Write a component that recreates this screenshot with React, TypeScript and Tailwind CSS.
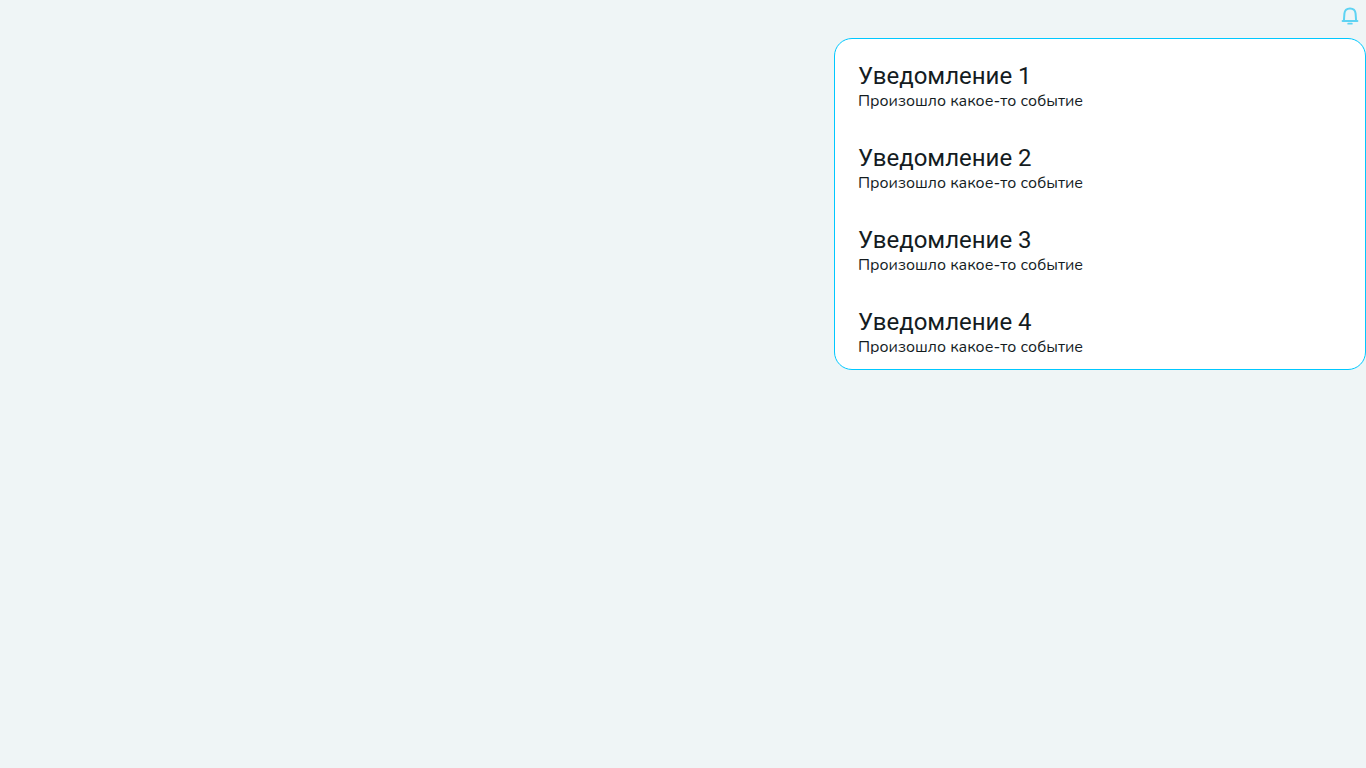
const notifications = [1, 2, 3, 4].map((id) => ({
  id,
  title: `Уведомление ${id}`,
  text: 'Произошло какое-то событие',
}));

function BellIcon() {
  return (
    <svg width="20" height="20" viewBox="0 0 20 20" fill="none" aria-hidden="true">
      <path
        d="M2.6 14.9H17.4M3.9 14.6L4.4 7.6C4.7 4.4 6.7 2.5 10 2.5S15.3 4.4 15.6 7.6L16.1 14.6"
        stroke="#5ed3f3"
        strokeWidth="2"
        strokeLinecap="round"
      />
      <path d="M8.2 17.7H11.8" stroke="#5ed3f3" strokeWidth="1.8" strokeLinecap="round" />
    </svg>
  );
}

export default function App() {
  return (
    <main className="flex min-h-screen flex-col items-end bg-[#eff5f6] text-[#141c1f]">
      <button type="button" aria-label="Уведомления" className="flex h-8 w-8 items-center justify-center">
        <BellIcon />
      </button>
      <section className="mt-1.5 w-full max-w-[532px] rounded-[18px] border border-[#00c8ff] bg-white p-[15px]">
        <ul className="flex h-[300px] flex-col gap-4 overflow-y-auto [scrollbar-width:none]">
          {notifications.map((item) => (
            <li key={item.id} className="shrink-0 p-2">
              <h2 className="font-['Roboto',sans-serif] text-2xl leading-7">{item.title}</h2>
              <p className="font-['Nunito','Lato',sans-serif] text-base leading-[22px]">{item.text}</p>
            </li>
          ))}
        </ul>
      </section>
    </main>
  );
}
